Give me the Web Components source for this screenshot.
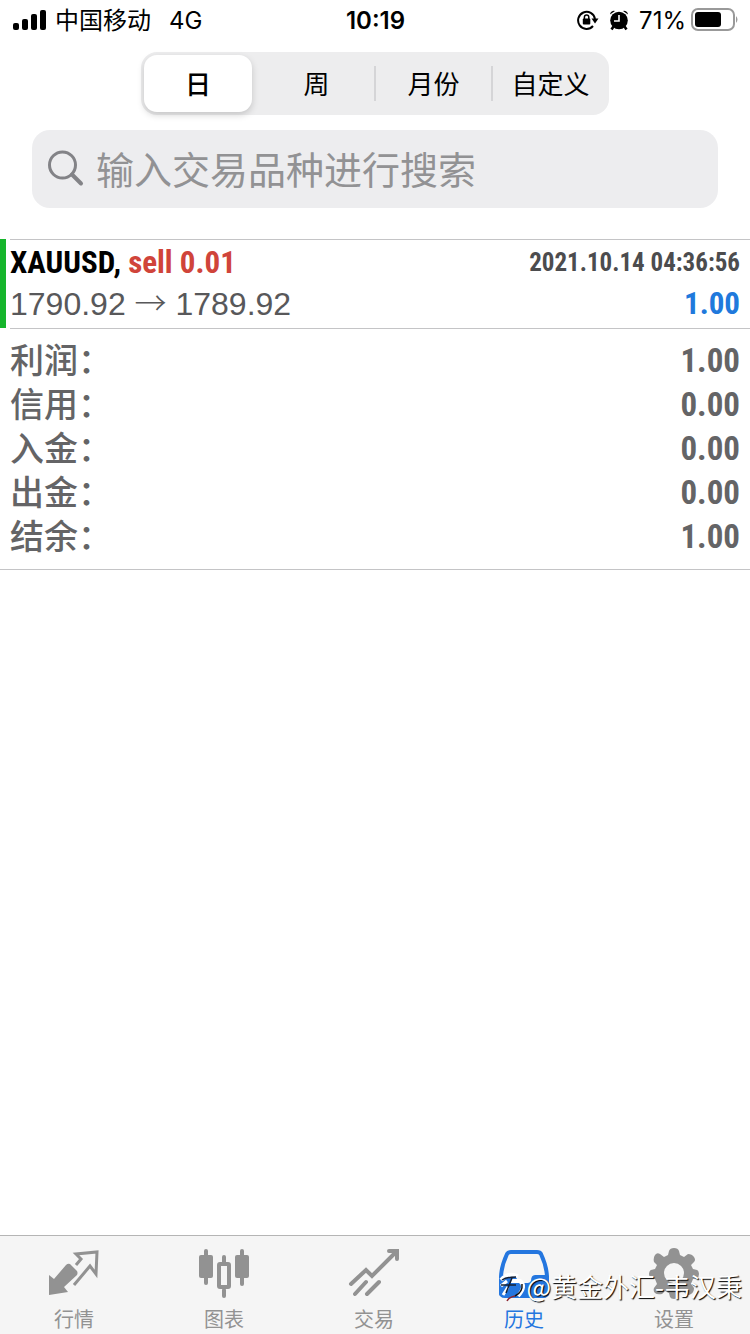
<!DOCTYPE html>
<html lang="zh-CN">
<head>
<meta charset="utf-8">
<meta name="viewport" content="width=device-width, initial-scale=1">
<title>历史</title>
<style>
body { margin: 0; background: #fff; font-family: "Liberation Sans", "Noto Sans CJK SC", sans-serif; color: #000; --figures: "Roboto Condensed", Roboto, sans-serif; }
</style>
</head>
<body>
<history-app></history-app>
<script>
const define = (name, html) => {
  const template = document.createElement('template');
  template.innerHTML = `<style>*{box-sizing:border-box}</style>${html}`;
  customElements.define(name, class extends HTMLElement {
    constructor() {
      super();
      this.attachShadow({ mode: 'open' }).append(template.content.cloneNode(true));
    }
  });
};

define('status-bar', `
<style>
:host { display: grid; grid-template-columns: 1fr auto 1fr; align-items: center; height: 41px; padding: 0 12px 0 13px; font-family: Inter, "Noto Sans CJK SC", sans-serif; font-size: 24px; line-height: 32px; }
.left, .right { display: flex; align-items: center; }
.left { gap: 8px; }
.net { margin-left: 10px; }
.right { justify-content: flex-end; gap: 10px; }
.time { font-weight: 600; }
svg { display: block; flex: none; margin-bottom: 2px; }
.battery { margin: 0 -1px 2px -7px; }
</style>
<div class="left">
  <svg width="34" height="22" viewBox="0 0 34 22" aria-hidden="true"><rect y="14" width="6" height="7" rx="2"/><rect x="9" y="10" width="6" height="11" rx="2"/><rect x="18" y="5" width="6" height="16" rx="2"/><rect x="27" y="1" width="6" height="20" rx="2"/></svg>
  <span>中国移动</span><span class="net">4G</span>
</div>
<span class="time">10:19</span>
<div class="right">
  <svg width="22" height="22" viewBox="0 0 22 22" aria-hidden="true"><path d="M18 10A8.500 8.500 0 1 0 16 17" fill="none" stroke="#000" stroke-width="2"/><path d="M14.500 9.500h7l-3.500 5z"/><rect x="5.800" y="9.600" width="7.500" height="6" rx="1"/><path d="M7.400 10V8.300a2.200 2.200 0 0 1 4.400 0V10" fill="none" stroke="#000" stroke-width="1.500"/></svg>
  <svg width="20" height="22" viewBox="0 0 20 22" aria-hidden="true"><circle cx="10" cy="11.500" r="8.800"/><path d="M4.500 17.500L2.500 20.500M15.500 17.500L17.500 20.500" stroke="#000" stroke-width="2.600"/><path d="M1 5.500A4 4 0 0 1 6 2zM19 5.500A4 4 0 0 0 14 2z"/><path d="M10 6v6H5" fill="none" stroke="#fff" stroke-width="1.600"/></svg>
  <span>71%</span>
  <svg class="battery" width="50" height="24" viewBox="0 0 50 24" aria-label="71%"><rect x="3" y="1" width="42" height="21" rx="6" fill="none" stroke="#999" stroke-width="2"/><rect x="6" y="4" width="26" height="15" rx="3"/><path d="M47 8q3 3.500 0 7z" fill="#999"/></svg>
</div>`);

define('segment-button', `
<style>
:host { display: block; flex: 1; min-width: 0; padding: 3px; position: relative; }
:host([divided])::before { content: ""; position: absolute; left: -1px; top: 14px; bottom: 14px; width: 2px; background: #d5d5d7; }
button { display: block; width: 100%; height: 57px; padding: 2px 0 0; border: 0; border-radius: 13px; background: none; color: #000; font: 400 26px/55px Inter, "Noto Sans CJK SC", sans-serif; white-space: nowrap; }
:host([selected]) button { width: calc(100% - 3px); background: #fff; font-weight: 500; box-shadow: 0 3px 7px #0000002b; }
</style>
<button type="button"><slot></slot></button>`);

define('period-picker', `
<style>
:host { display: flex; width: 62.4%; margin: 11px auto 0; border-radius: 16px; background: #ededee; }
</style>
<slot></slot>`);

define('search-field', `
<style>
:host { display: block; margin: 15px 32px 0; }
label { display: flex; align-items: center; gap: 11px; height: 78px; padding: 0 15px; border-radius: 18px; background: #ededef; }
svg { flex: none; }
input { flex: 1; min-width: 0; height: 60px; padding: 0 0 4px; border: 0; outline: 0; background: none; color: #000; font: 400 38px/56px "Noto Sans CJK SC", sans-serif; }
input::placeholder { color: #929294; opacity: 1; }
</style>
<label>
  <svg width="38" height="38" viewBox="0 0 38 38" fill="none" stroke="#838387" aria-hidden="true"><circle cx="15.500" cy="15" r="13" stroke-width="3"/><path d="M25 24.500L34 33.500" stroke-width="4" stroke-linecap="round"/></svg>
  <input type="text" aria-label="搜索" placeholder="输入交易品种进行搜索">
</label>`);

define('trade-row', `
<style>
:host { display: flex; height: 90px; margin-top: 31px; font-family: var(--figures); }
.bar { width: 6px; margin-bottom: 1px; background: #16b52c; }
.body { flex: 1; margin-left: 4px; padding: 2px 10px 0 0; border: solid #c4c4c6; border-width: 1px 0; }
.line { display: flex; justify-content: space-between; align-items: center; height: 41px; line-height: 40px; }
.name { font-size: 31px; font-weight: 700; }
::slotted([slot=side]) { color: #d0443a; }
.when { font-size: 25px; font-weight: 700; color: #4c4c4e; }
.price { font-family: "Liberation Sans", sans-serif; font-size: 32px; color: #58585a; }
.profit { font-size: 31px; font-weight: 700; color: #2079dc; }
</style>
<div class="bar"></div>
<div class="body">
  <div class="line"><span class="name"><slot name="symbol"></slot> <slot name="side"></slot></span><span class="when"><slot name="time"></slot></span></div>
  <div class="line"><span class="price"><slot name="price"></slot></span><span class="profit"><slot name="profit"></slot></span></div>
</div>`);

define('summary-row', `
<style>
:host { display: flex; justify-content: space-between; align-items: center; height: 44px; color: #646466; line-height: 44px; }
.label { font: 500 34px/44px "Liberation Sans", "Noto Sans CJK SC", sans-serif; }
.value { font-family: var(--figures); font-size: 33px; font-weight: 700; }
</style>
<span class="label"><slot></slot></span><span class="value"><slot name="value"></slot></span>`);

define('account-summary', `
<style>
:host { display: block; padding: 10px 10px; border-bottom: 1px solid #c4c4c6; }
</style>
<slot></slot>`);

define('tab-item', `
<style>
:host { display: block; flex: 1; color: #929292; }
:host([current]) { color: #2476df; }
a { display: flex; flex-direction: column; align-items: center; padding-top: 11px; color: inherit; text-decoration: none; font: 400 20px/28px "Noto Sans CJK SC", sans-serif; }
.icon { display: block; height: 58px; }
::slotted(svg) { display: block; }
a > span { margin-right: 2px; }
</style>
<a href="#"><span class="icon"><slot name="icon"></slot></span><span><slot></slot></span></a>`);

define('tab-bar', `
<style>
:host { display: flex; position: relative; height: 99px; margin-top: auto; background: #f5f5f5; border-top: 1px solid #b5b5b5; }
</style>
<slot></slot>`);

define('water-mark', `
<style>
:host { position: absolute; right: 8px; bottom: 30px; display: flex; align-items: center; color: #fff; pointer-events: none; font: 400 26px/36px "Noto Sans CJK SC", sans-serif; text-shadow: 1px 1px 1px #000; white-space: nowrap; }
svg { display: block; }
</style>
<svg width="28" height="34" viewBox="0 0 28 34" fill="none" aria-hidden="true"><path d="M3 11Q10 3 20 7" stroke="#fff" stroke-width="4"/><path d="M13 12H22Q29 17 20 27" stroke="#fff" stroke-width="4"/><path d="M3 17L9 12M5 26L10 18" stroke="#fff" stroke-width="3"/><path d="M4 11Q8 8 18 8M14 9L8 24M3 16H18" stroke="#162033" stroke-width="1.500"/><path d="M24 15Q25 23 17 27" stroke="#111" stroke-width="1.500"/><path d="M17 27Q11 28 9 32" stroke="#8d2630" stroke-width="1.500"/></svg>
<span><slot></slot></span>`);

define('history-app', `
<style>
:host { display: flex; flex-direction: column; min-height: 100vh; }
.arrow { font-family: "Noto Sans CJK SC", sans-serif; font-weight: 300; line-height: 1; }
</style>
<status-bar></status-bar>
<period-picker>
  <segment-button selected>日</segment-button>
  <segment-button>周</segment-button>
  <segment-button divided>月份</segment-button>
  <segment-button divided>自定义</segment-button>
</period-picker>
<search-field></search-field>
<trade-row>
  <span slot="symbol">XAUUSD,</span><span slot="side">sell 0.01</span>
  <span slot="time">2021.10.14 04:36:56</span>
  <span slot="price">1790.92 <span class="arrow">→</span> 1789.92</span><span slot="profit">1.00</span>
</trade-row>
<account-summary>
  <summary-row>利润：<span slot="value">1.00</span></summary-row>
  <summary-row>信用：<span slot="value">0.00</span></summary-row>
  <summary-row>入金：<span slot="value">0.00</span></summary-row>
  <summary-row>出金：<span slot="value">0.00</span></summary-row>
  <summary-row>结余：<span slot="value">1.00</span></summary-row>
</account-summary>
<tab-bar>
  <tab-item>行情<svg slot="icon" width="52" height="52" viewBox="0 0 52 52" aria-hidden="true"><path d="M1 28L6 32L18 18Q20 16 22 17L29 24Q30 26 29 28L16 40L20 45L1 48Z" fill="currentColor"/><path d="M28 18L33 12L28 7L49 5L48 27L42 19L26 38" fill="none" stroke="currentColor" stroke-width="3"/></svg></tab-item>
  <tab-item>图表<svg slot="icon" width="52" height="52" viewBox="0 0 52 52" fill="currentColor" aria-hidden="true"><rect x="1" y="8" width="14" height="23" rx="2"/><rect x="6" y="2" width="4" height="36" rx="2"/><rect x="37" y="8" width="14" height="23" rx="2"/><rect x="42" y="2" width="4" height="37" rx="2"/><rect x="21" y="17" width="10" height="23" rx="1" fill="none" stroke="currentColor" stroke-width="4"/><rect x="24" y="8" width="4" height="9" rx="2"/><rect x="24" y="41" width="4" height="10" rx="2"/></svg></tab-item>
  <tab-item>交易<svg slot="icon" width="52" height="52" viewBox="0 0 52 52" fill="none" stroke="currentColor" stroke-width="4" stroke-linecap="round" aria-hidden="true"><path d="M3 37L18 23L24 29L49 4M41 4H49V12M7 47L18 35M19 47L31 35"/></svg></tab-item>
  <tab-item current>历史<svg slot="icon" width="52" height="52" viewBox="0 0 52 52" fill="none" stroke="currentColor" stroke-width="4" stroke-linejoin="round" aria-hidden="true"><path d="M9 7Q10 5 13 5H39Q42 5 43 7Q49 20 49 31V45Q49 49 45 49H7Q3 49 3 45V31Q3 20 9 7Z"/><path d="M3 30H15Q17 30 17 34Q18 38 22 38H30Q34 38 35 34Q35 30 37 30H49V47H3Z" fill="currentColor"/></svg></tab-item>
  <tab-item>设置<svg slot="icon" width="52" height="52" viewBox="0 0 52 52" aria-hidden="true"><path fill="currentColor" fill-rule="evenodd" d="M21 4Q22 1 26 1T31 4L32 8L36 10L40 7Q44 7 46 10T46 15L43 18L45 22L49 23Q51 24 51 27T49 31L45 32L43 37L46 41Q46 45 43 47T38 47L35 44L31 46L30 50Q29 52 26 52T22 50L21 46L17 44L14 47Q9 48 7 46T6 41L9 37L7 32L3 31Q1 30 1 27T3 23L7 22L9 18L6 15Q5 11 7 8T12 7L16 10L20 8ZM26 16A10 10 0 1 0 26 36A10 10 0 1 0 26 16Z"/></svg></tab-item>
  <water-mark>@黄金外汇-韦汉秉</water-mark>
</tab-bar>`);
</script>
</body>
</html>
